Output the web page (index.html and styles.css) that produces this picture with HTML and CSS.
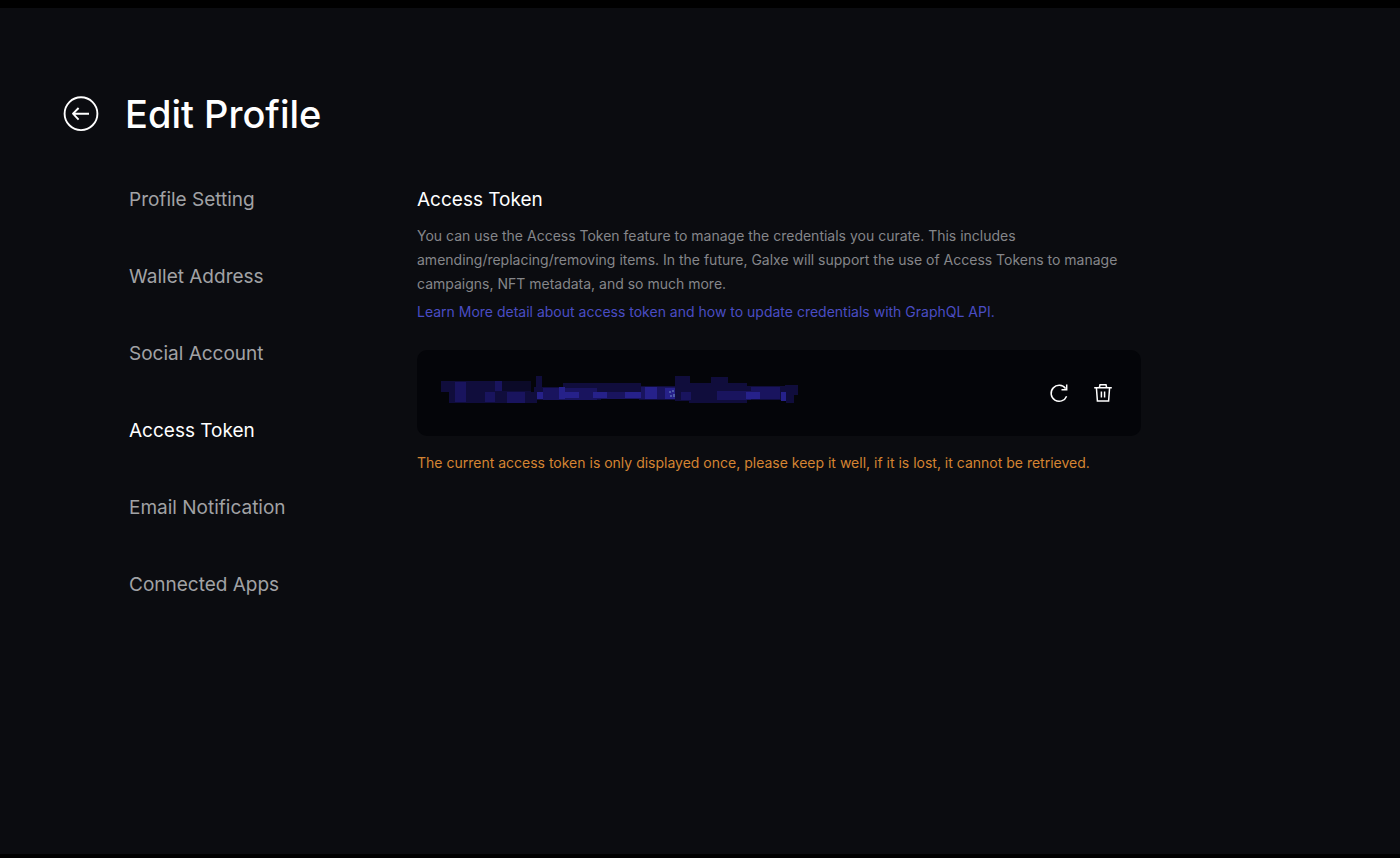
FILE: index.html
```html
<!DOCTYPE html>
<html lang="en">
<head>
    <meta charset="UTF-8">
    <meta name="viewport" content="width=device-width, initial-scale=1.0">
    <title>Edit Profile</title>
    <link rel="stylesheet" href="styles.css">
</head>
<body>
    <header class="page-header">
        <button class="back-btn" type="button" aria-label="Back">
            <svg width="36" height="36" viewBox="0 0 36 36" fill="none" stroke="currentColor" stroke-width="1.9">
                <circle cx="18" cy="17.7" r="16.4" />
                <path d="M26 17.7H10M15.6 12L10 17.7l5.6 5.9" stroke-linejoin="round" />
            </svg>
        </button>
        <h1>Edit Profile</h1>
    </header>

    <div class="layout">
        <nav class="side-nav">
            <a href="#profile">Profile Setting</a>
            <a href="#wallet">Wallet Address</a>
            <a href="#social">Social Account</a>
            <a href="#token" class="active">Access Token</a>
            <a href="#email">Email Notification</a>
            <a href="#apps">Connected Apps</a>
        </nav>

        <main class="content">
            <h2>Access Token</h2>
            <p class="description">You can use the Access Token feature to manage the credentials you curate. This includes amending/replacing/removing items. In the future, Galxe will support the use of Access Tokens to manage campaigns, NFT metadata, and so much more.</p>
            <a class="learn-more" href="#docs">Learn More detail about access token and how to update credentials with GraphQL API.</a>

            <div class="token-box">
                <!-- masked token -->
                <svg class="token-mask" width="360" height="40" viewBox="0 0 360 40" aria-hidden="true">
                    <g fill="#100d3c">
                        <rect x="0" y="8" width="9" height="11" />
                        <rect x="8" y="8" width="82" height="22" />
                        <rect x="72" y="19" width="24" height="11" />
                        <rect x="95" y="3" width="6" height="12" />
                        <rect x="93" y="14" width="30" height="13" />
                        <rect x="122" y="10" width="38" height="17" />
                        <rect x="158" y="10" width="42" height="16" />
                        <rect x="198" y="13" width="40" height="14" />
                        <rect x="234" y="3" width="15" height="25" />
                        <rect x="248" y="10" width="58" height="20" />
                        <rect x="270" y="4" width="17" height="26" />
                        <rect x="304" y="13" width="42" height="14" />
                        <rect x="344" y="12" width="13" height="10" />
                        <rect x="345" y="20" width="8" height="10" />
                    </g>
                    <rect x="58" y="8" width="32" height="10" fill="#0b0a28" />
                    <g fill="#19145e">
                        <rect x="14" y="9" width="11" height="20" />
                        <rect x="44" y="19" width="10" height="10" />
                        <rect x="54" y="8" width="7" height="10" />
                        <rect x="66" y="19" width="18" height="11" />
                        <rect x="102" y="15" width="54" height="12" />
                        <rect x="156" y="19" width="44" height="7" />
                        <rect x="200" y="14" width="34" height="12" />
                        <rect x="240" y="19" width="10" height="8" />
                        <rect x="276" y="18" width="34" height="9" />
                        <rect x="310" y="14" width="29" height="12" />
                    </g>
                    <g fill="#26218a">
                        <rect x="96" y="19" width="6" height="7" />
                        <rect x="118" y="14" width="6" height="12" />
                        <rect x="124" y="19" width="14" height="6" />
                        <rect x="152" y="19" width="14" height="6" />
                        <rect x="184" y="19" width="16" height="6" />
                        <rect x="204" y="14" width="12" height="12" />
                        <rect x="224" y="15" width="10" height="11" />
                        <rect x="305" y="19" width="14" height="7" />
                        <rect x="340" y="19" width="5" height="9" />
                    </g>
                    <g fill="#4d5aa8">
                        <rect x="228" y="18" width="2" height="2" />
                        <rect x="231" y="17" width="2" height="2" />
                        <rect x="229" y="22" width="2" height="2" />
                        <rect x="232" y="21" width="2" height="3" />
                    </g>
                </svg>
                <div class="token-actions">
                    <button class="icon-btn" type="button" aria-label="Refresh token">
                        <svg width="20" height="20" viewBox="0 0 20 20" fill="none" stroke="currentColor" stroke-width="1.5">
                            <path d="M17.6 13.2A8 8 0 1 1 16.6 5.6M17.7 1.4v5.3h-5.2" />
                        </svg>
                    </button>
                    <button class="icon-btn" type="button" aria-label="Delete token">
                        <svg width="20" height="20" viewBox="0 0 20 20" fill="none" stroke="currentColor" stroke-width="1.5">
                            <path d="M1.2 4.7h17.6M6.4 4.4l.6-2.6h6l.6 2.6M3.4 4.7l1 13.4h11.2l1-13.4M8.4 8.6v5.8M11.6 8.6v5.8" />
                        </svg>
                    </button>
                </div>
            </div>

            <p class="warning">The current access token is only displayed once, please keep it well, if it is lost, it cannot be retrieved.</p>
        </main>
    </div>
</body>
</html>
```
FILE: styles.css
```css
* {
    box-sizing: border-box;
}

body {
    margin: 0;
    min-height: 100vh;
    padding: 80px 63px;
    border-top: 8px solid #000;
    border-bottom: 4px solid #000;
    background-color: #0b0c10;
    color: #fff;
    font-family: Inter, "Liberation Sans", sans-serif;
}

h1, h2, p {
    margin: 0;
}

a {
    text-decoration: none;
}

button {
    padding: 0;
    border: none;
    background: none;
    color: inherit;
    cursor: pointer;
}

svg {
    display: block;
}

.page-header {
    display: flex;
    align-items: center;
    gap: 26px;
}

h1 {
    font-size: 38px;
    font-weight: 500;
    line-height: 52px;
}

.layout {
    display: flex;
    margin-top: 48px;
    padding-left: 66px;
}

.side-nav {
    display: flex;
    flex-direction: column;
    flex: 0 0 288px;
    gap: 53px;
}

.side-nav a {
    color: #a1a2a5;
    font-size: 19px;
    line-height: 24px;
}

.side-nav a.active {
    color: #fff;
}

.content {
    flex: 1;
    max-width: 724px;
}

h2 {
    font-size: 19px;
    font-weight: 400;
    line-height: 24px;
}

.description {
    margin-top: 12px;
    color: #85868a;
    font-size: 14px;
    line-height: 24px;
}

.learn-more {
    display: block;
    margin-top: 4px;
    color: #4a4cc4;
    font-size: 14px;
    line-height: 24px;
}

.token-box {
    display: flex;
    align-items: center;
    justify-content: space-between;
    margin-top: 26px;
    padding: 23px 28px 23px 24px;
    border-radius: 10px;
    background-color: #040509;
}

.token-actions {
    display: flex;
    gap: 24px;
}

.warning {
    margin-top: 15px;
    color: #d58432;
    font-size: 14px;
    line-height: 24px;
}
```
